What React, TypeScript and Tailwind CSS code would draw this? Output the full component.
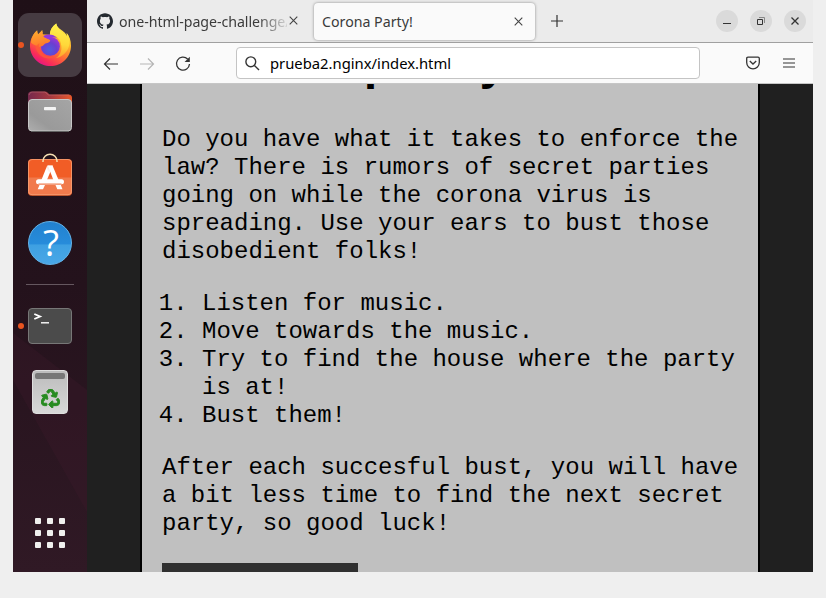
import type { ReactNode } from "react";
import { SiGithub } from "react-icons/si";
import { FaRecycle } from "react-icons/fa";

const ui = "font-['Noto_Sans','Open_Sans',sans-serif]";

function FirefoxIcon() {
  return (
    <svg className="-mt-[2px]" width="43" height="45" viewBox="0 0 44 46">
      <defs>
        <linearGradient id="ffBody" x1="0.85" y1="0.1" x2="0.3" y2="1">
          <stop offset="0" stopColor="#fff04a" />
          <stop offset="0.3" stopColor="#ffb52b" />
          <stop offset="0.6" stopColor="#ff6a36" />
          <stop offset="0.85" stopColor="#fa2d58" />
          <stop offset="1" stopColor="#e31587" />
        </linearGradient>
        <radialGradient id="ffGlobe" cx="0.45" cy="0.7" r="0.7">
          <stop offset="0" stopColor="#4e5de0" />
          <stop offset="0.55" stopColor="#6b3fd0" />
          <stop offset="1" stopColor="#a234d8" />
        </radialGradient>
        <linearGradient id="ffFlame" x1="0.6" y1="0" x2="0.5" y2="1">
          <stop offset="0" stopColor="#fff44f" />
          <stop offset="0.6" stopColor="#ffd83a" />
          <stop offset="1" stopColor="#ff9e2c" />
        </linearGradient>
        <linearGradient id="ffFox" x1="0" y1="0" x2="0.3" y2="1">
          <stop offset="0" stopColor="#ffb22e" />
          <stop offset="1" stopColor="#ff7a2c" />
        </linearGradient>
      </defs>
      <path d="M8.200 8.600C3.600 12.800 1 18.500 1 24.200C1 35.800 10.600 45 22 45C33.400 45 43 35.800 43 24.200C43 19 41.500 14.600 38.700 11.400L39 15C36.500 8 28.700 7.500 27.900 1.500C23.500 4.600 21.300 8.700 21.500 13L13.500 12.500L13.700 8L9 13Z" fill="url(#ffBody)" />
      <path d="M27.900 1.500C23.500 4.600 21 9 21.500 13.600C28 13.500 32.500 17.500 33 24C34 30 31 35 27.500 36.800C34.500 36 40.500 30 41.500 22C41.900 17.600 40.700 13.500 38.500 11.200L38.600 14.500L36.300 10.500L36.200 13C33.500 8.500 28.600 7 27.900 1.500Z" fill="url(#ffFlame)" />
      <circle cx="21.800" cy="24.800" r="9.800" fill="url(#ffGlobe)" />
      <path d="M12.500 17C15 12.500 23.500 10.800 29 16.500C25.500 14.800 23 15.200 21 17.500Z" fill="#9338df" />
      <path d="M2 21C2.500 15 5 11 8.500 8.300C8.300 10 8.700 11.500 9.500 12.500C10.800 11 12.500 10 14.300 9.700C13.800 11.500 14 13.500 15 15C17.500 17.200 21.500 17.300 21.700 19C21.500 21 18 21.800 16 22.400C15 24 12.800 25 10.500 25.500C7.500 24.500 4 23 2 21Z" fill="url(#ffFox)" />
      <path d="M10.500 21.800C9.500 31.500 17 37.200 25.500 35.500C20 40 8.500 36 6.500 25Z" fill="#ff5b36" opacity=".75" />
    </svg>
  );
}

function FilesIcon() {
  return (
    <svg width="46" height="42" viewBox="0 0 46 42">
      <defs>
        <linearGradient id="folderBack" x1="0" x2="1">
          <stop offset="0" stopColor="#75294d" />
          <stop offset="0.5" stopColor="#a53940" />
          <stop offset="1" stopColor="#e8582b" />
        </linearGradient>
        <linearGradient id="folderFront" x1="1" y1="0" x2="0" y2="1">
          <stop offset="0" stopColor="#a5a5a5" />
          <stop offset="0.7" stopColor="#9a9a9a" />
          <stop offset="1" stopColor="#aeaeae" />
        </linearGradient>
      </defs>
      <path d="M1 18V4Q1 .5 4.500 .5H18Q19.500 .5 20.500 1.500L22.500 3.500H41.500Q45 3.500 45 7V18Z" fill="url(#folderBack)" />
      <path d="M2 4Q3 1 5 1H18L21.500 4H42" fill="none" stroke="#c9797c" strokeWidth=".7" opacity=".7" />
      <rect x="1.500" y="8.500" width="43" height="31.500" rx="3.500" fill="url(#folderFront)" stroke="#c7c7c7" />
      <path d="M4 40.500H42" stroke="#636363" />
      <rect x="17" y="16" width="12" height="3.300" rx=".8" fill="#f4f4f4" />
    </svg>
  );
}

function SoftwareIcon() {
  return (
    <svg width="46" height="44" viewBox="0 0 46 44">
      <defs>
        <linearGradient id="letterLeg" x1="0" y1="1" x2="0.8" y2="0">
          <stop offset="0" stopColor="#fff" />
          <stop offset=".65" stopColor="#fff" />
          <stop offset="1" stopColor="#f9c6ad" />
        </linearGradient>
      </defs>
      <rect x="1" y="6.500" width="44" height="36.500" rx="4" fill="#b64b25" />
      <rect x="1" y="6" width="44" height="36" rx="4" fill="#f15d26" />
      <path d="M1 24.500H45V38Q45 42 41 42H5Q1 42 1 38Z" fill="#f17a4c" />
      <rect x="1.500" y="6.500" width="43" height="35.200" rx="3.500" fill="none" stroke="#f6a176" strokeWidth=".8" />
      <path d="M16 9V8A7 6.800 0 0 1 30 8V9" fill="none" stroke="#f5dfb1" strokeWidth="1.500" />
      <path d="M20.200 12.500H26L19.500 28H14Z" fill="url(#letterLeg)" />
      <path d="M20.800 12.500H25.500L32 28H26.800Z" fill="#fff" />
      <path d="M12.500 32H18L16 36.200H10.700ZM28.500 32H33.800L35.500 36.200H30.300Z" fill="#fff" />
      <rect x="9" y="26.200" width="28" height="5" rx="2.500" fill="#fff" />
      <path d="M11.500 30.700H34.500" stroke="#f5b094" />
    </svg>
  );
}

function HelpIcon() {
  return (
    <div className="grid size-[44px] place-items-center rounded-full border border-[#63b4ea] bg-[linear-gradient(#2281cf,#278cdb_53%,#3ea0e2_54%,#49a7e7)]">
      <span className="-mt-[3px] ml-[2px] font-['Open_Sans',sans-serif] text-[37px] leading-[42px] text-white">?</span>
    </div>
  );
}

function TrashIcon() {
  return (
    <div className="flex h-[44px] w-[36px] flex-col items-center rounded-[4px] border border-[#dedede] bg-linear-to-b from-[#bcbcbc] to-[#d8d8d8] pt-[2px]">
      <div className="h-[6px] w-[30px] rounded-[2px] bg-[#777]" />
      <FaRecycle className="mt-[10px] size-[19px] text-[#278b20]" stroke="currentColor" strokeWidth="26" />
    </div>
  );
}

function Dock() {
  return (
    <aside className="relative flex h-full w-[74px] shrink-0 flex-col items-center overflow-hidden bg-linear-to-b from-[#1f1017] via-[#24121c] to-[#301925]">
      <svg className="absolute inset-0" width="74" height="572">
        <path d="M0 333L74 390V512L0 380Z" fill="#3b1a2c" opacity=".35" />
      </svg>
      <div className="relative mt-[13px] flex h-16 w-16 shrink-0 items-center justify-center rounded-[11px] bg-[#463b42]">
        <FirefoxIcon />
        <i className="absolute top-[29px] left-0 size-[6px] rounded-full bg-[#e95420]" />
      </div>
      <div className="relative mt-[14px] h-[42px] shrink-0"><FilesIcon /></div>
      <div className="relative mt-[20px] h-[44px] shrink-0"><SoftwareIcon /></div>
      <div className="relative mt-[24px] h-[44px] shrink-0"><HelpIcon /></div>
      <div className="relative mt-[19px] h-px w-12 shrink-0 bg-[#65575f]" />
      <div className="relative mt-[23px] h-[36px] w-16 shrink-0">
        <i className="absolute top-[15px] left-0 size-[6px] rounded-full bg-[#e95420]" />
        <div className="mx-auto h-[36px] w-[44px] rounded-[4px] border border-[#777] bg-[#4b4b4b]">
          <svg width="42" height="34" fill="none" stroke="#fff">
            <path d="M5.300 5L11 7.500L5.300 10" strokeWidth="1.900" />
            <path d="M12 13.800H20" strokeWidth="1.400" />
          </svg>
        </div>
      </div>
      <div className="relative mt-[26px] h-[44px] shrink-0"><TrashIcon /></div>
      <div className="relative mt-[104px] grid grid-cols-3 gap-[6px]">
        {Array.from({ length: 9 }, (_, i) => (
          <i key={i} className="size-[6px] rounded-[1px] bg-[#f0f0ee]" />
        ))}
      </div>
    </aside>
  );
}

function Cross({ className = "" }: { className?: string }) {
  return (
    <svg className={className} width="9" height="9" viewBox="0 0 9 9" stroke="#444" strokeWidth="1.100">
      <path d="M.7 .7L8.300 8.300M8.300 .7L.7 8.300" />
    </svg>
  );
}

function WindowButton({ children }: { children: ReactNode }) {
  return <button className="grid size-[22px] place-items-center rounded-full bg-[#dadada]">{children}</button>;
}

function TabBar() {
  return (
    <header className={`flex h-[43px] shrink-0 items-center border-b border-[#a0a0a0] bg-[#ebebeb] text-[14.2px] text-[#3b3b3b] ${ui}`}>
      <div className="ml-[10px] flex w-[202px] items-center">
        <SiGithub className="size-4 shrink-0 text-[#24292f]" />
        <span className="ml-[6px] w-[168px] shrink-0 overflow-hidden pt-px tracking-[-0.06px] whitespace-nowrap [mask-image:linear-gradient(90deg,#000_138px,transparent_172px)]">
          one-html-page-challenge/
        </span>
        <Cross className="ml-[2px] shrink-0" />
      </div>
      <div className="ml-[15px] flex h-[37px] w-[221px] items-center justify-between rounded-[4px] bg-[#fafafa] pr-[12px] pl-[8px] shadow-[0_0_3px_#888]">
        <span className="pt-px">Corona Party!</span>
        <Cross />
      </div>
      <svg className="ml-[16px]" width="12" height="12" stroke="#333" strokeWidth="1.200">
        <path d="M6 0V12M0 6H12" />
      </svg>
      <div className="mr-[7px] ml-auto flex gap-3">
        <WindowButton>
          <svg width="8" height="8" stroke="#333"><path d="M0 6.500H8" /></svg>
        </WindowButton>
        <WindowButton>
          <svg width="8" height="8" fill="none"><path d="M2 .5H7.500V6" stroke="#888" /><path d="M.5 2.500H5.500V7.500H.5Z" stroke="#333" /></svg>
        </WindowButton>
        <WindowButton>
          <svg width="8" height="8" stroke="#333" strokeWidth="1.300"><path d="M.5 .5L7.500 7.500M7.500 .5L.5 7.500" /></svg>
        </WindowButton>
      </div>
    </header>
  );
}

function AddressBar() {
  return (
    <nav className="flex h-[41px] shrink-0 items-center border-b border-[#c6c6c6] bg-[#fafafa]">
      <svg className="mt-px ml-[16px]" width="16" height="14" fill="none" stroke="#333" strokeWidth="1.200">
        <path d="M15 7H1.500M7 1.500L1.500 7L7 12.500" />
      </svg>
      <svg className="mt-px ml-[20px]" width="16" height="14" fill="none" stroke="#b5b5b5" strokeWidth="1.200">
        <path d="M1 7H14.500M9 1.500L14.500 7L9 12.500" />
      </svg>
      <svg className="mt-px ml-[20px]" width="16" height="16" fill="none" stroke="#333" strokeWidth="1.300">
        <path d="M12.600 3A6.500 6.500 0 1 0 14.500 8" />
        <path d="M14.800 .8V6H9.600Z" fill="#333" stroke="none" />
      </svg>
      <div className="ml-[45px] flex h-8 w-[464px] items-center rounded-[4px] border border-[#c4c4c4] bg-white">
        <svg className="ml-[8px]" width="15" height="15" fill="none" stroke="#333" strokeWidth="1.400">
          <circle cx="5.800" cy="5.800" r="4.900" /><path d="M9.400 9.400L14 14" />
        </svg>
        <span className={`ml-[10px] text-[14.800px] whitespace-nowrap text-black ${ui}`}>prueba2.nginx/index.html</span>
      </div>
      <svg className="ml-[46px]" width="14" height="14" fill="none" stroke="#333" strokeWidth="1.300">
        <path d="M2 1.200H12Q13.300 1.200 13.300 2.500V6.500A6.300 6.300 0 0 1 .7 6.500V2.500Q.7 1.200 2 1.200ZM3.800 5L7 8L10.200 5" />
      </svg>
      <svg className="ml-[23px]" width="12" height="12" stroke="#333" strokeWidth="1.200">
        <path d="M0 2H12M0 6H12M0 10H12" />
      </svg>
    </nav>
  );
}

function Page() {
  return (
    <div className="flex min-h-0 flex-1 justify-center overflow-hidden bg-[#202020]">
      <main className="h-full w-[620px] overflow-hidden border-x-2 border-black bg-[#c0c0c0] px-[20px] font-['Liberation_Mono',monospace] text-[24px] leading-7 text-black">
        <h1 className="-mt-[45px] h-[55px] text-[48px] leading-[54px] font-bold">Corona party</h1>
        <p className="mt-8 w-[580px]">
          Do you have what it takes to enforce the law? There is rumors of secret parties going on while the corona virus is spreading. Use your ears to bust those disobedient folks!
        </p>
        <ol className="mt-6 list-decimal pl-[40px]">
          <li>Listen for music.</li>
          <li>Move towards the music.</li>
          <li>Try to find the house where the party is at!</li>
          <li>Bust them!</li>
        </ol>
        <p className="mt-6 w-[580px]">
          After each succesful bust, you will have a bit less time to find the next secret party, so good luck!
        </p>
        <div className="mt-[25px] h-10 w-[196px] bg-[#303030]" />
      </main>
    </div>
  );
}

export default function App() {
  return (
    <div className="h-[598px] w-[826px] overflow-hidden bg-[#efefef] pl-[13px]">
      <div className="flex h-[572px] w-[800px] overflow-hidden">
        <Dock />
        <div className="flex min-w-0 flex-1 flex-col">
          <TabBar />
          <AddressBar />
          <Page />
        </div>
      </div>
    </div>
  );
}
